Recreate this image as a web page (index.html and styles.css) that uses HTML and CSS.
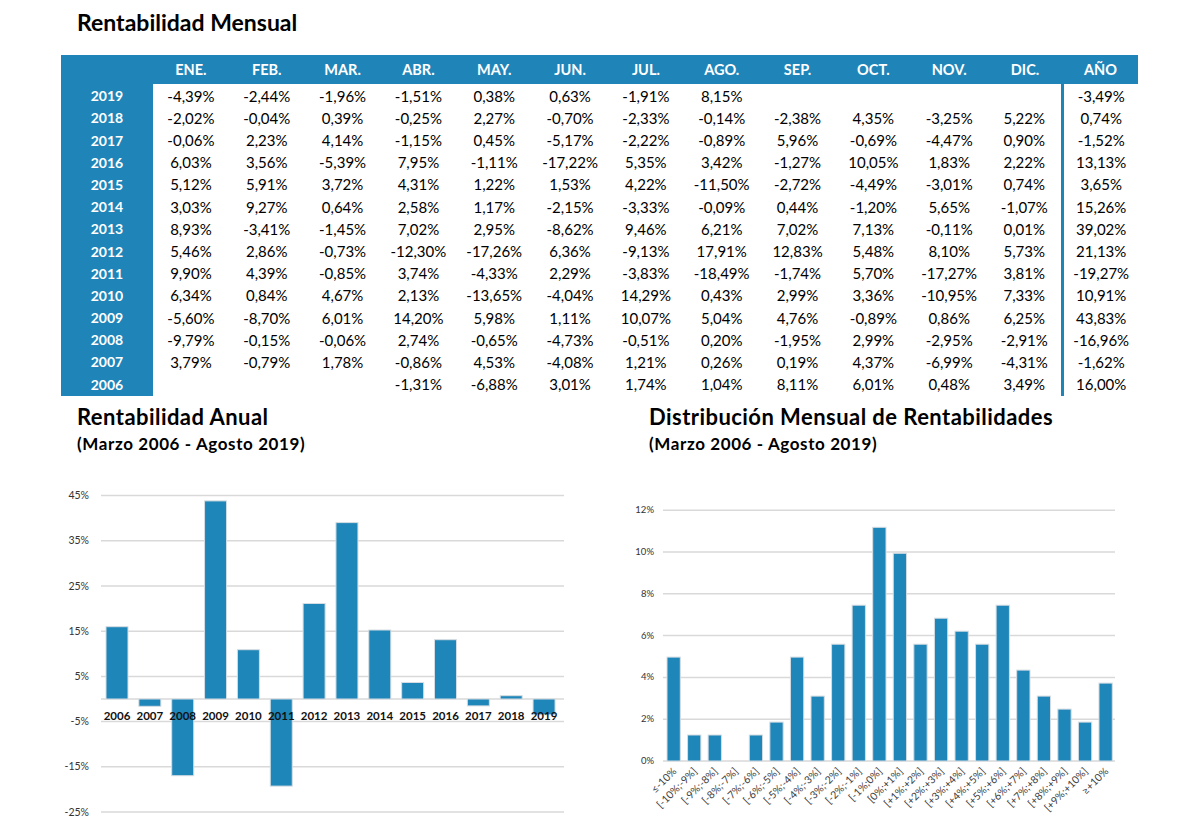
FILE: index.html
```html
<!DOCTYPE html>
<html lang="es">
<head>
<meta charset="utf-8">
<title>Rentabilidad</title>
<link rel="stylesheet" href="styles.css">
</head>
<body>
<div class="page">
  <h1 class="title-main">Rentabilidad Mensual</h1>
  <table class="ret-table">
    <colgroup>
      <col class="c-year">
      <col class="c-m"><col class="c-m"><col class="c-m"><col class="c-m"><col class="c-m"><col class="c-m">
      <col class="c-m"><col class="c-m"><col class="c-m"><col class="c-m"><col class="c-m"><col class="c-m">
      <col class="c-anio">
    </colgroup>
    <thead>
      <tr><th></th><th>ENE.</th><th>FEB.</th><th>MAR.</th><th>ABR.</th><th>MAY.</th><th>JUN.</th><th>JUL.</th><th>AGO.</th><th>SEP.</th><th>OCT.</th><th>NOV.</th><th>DIC.</th><th>AÑO</th></tr>
    </thead>
    <tbody>
      <tr><td class="yr">2019</td><td>-4,39%</td><td>-2,44%</td><td>-1,96%</td><td>-1,51%</td><td>0,38%</td><td>0,63%</td><td>-1,91%</td><td>8,15%</td><td></td><td></td><td></td><td></td><td class="anio">-3,49%</td></tr>
      <tr><td class="yr">2018</td><td>-2,02%</td><td>-0,04%</td><td>0,39%</td><td>-0,25%</td><td>2,27%</td><td>-0,70%</td><td>-2,33%</td><td>-0,14%</td><td>-2,38%</td><td>4,35%</td><td>-3,25%</td><td>5,22%</td><td class="anio">0,74%</td></tr>
      <tr><td class="yr">2017</td><td>-0,06%</td><td>2,23%</td><td>4,14%</td><td>-1,15%</td><td>0,45%</td><td>-5,17%</td><td>-2,22%</td><td>-0,89%</td><td>5,96%</td><td>-0,69%</td><td>-4,47%</td><td>0,90%</td><td class="anio">-1,52%</td></tr>
      <tr><td class="yr">2016</td><td>6,03%</td><td>3,56%</td><td>-5,39%</td><td>7,95%</td><td>-1,11%</td><td>-17,22%</td><td>5,35%</td><td>3,42%</td><td>-1,27%</td><td>10,05%</td><td>1,83%</td><td>2,22%</td><td class="anio">13,13%</td></tr>
      <tr><td class="yr">2015</td><td>5,12%</td><td>5,91%</td><td>3,72%</td><td>4,31%</td><td>1,22%</td><td>1,53%</td><td>4,22%</td><td>-11,50%</td><td>-2,72%</td><td>-4,49%</td><td>-3,01%</td><td>0,74%</td><td class="anio">3,65%</td></tr>
      <tr><td class="yr">2014</td><td>3,03%</td><td>9,27%</td><td>0,64%</td><td>2,58%</td><td>1,17%</td><td>-2,15%</td><td>-3,33%</td><td>-0,09%</td><td>0,44%</td><td>-1,20%</td><td>5,65%</td><td>-1,07%</td><td class="anio">15,26%</td></tr>
      <tr><td class="yr">2013</td><td>8,93%</td><td>-3,41%</td><td>-1,45%</td><td>7,02%</td><td>2,95%</td><td>-8,62%</td><td>9,46%</td><td>6,21%</td><td>7,02%</td><td>7,13%</td><td>-0,11%</td><td>0,01%</td><td class="anio">39,02%</td></tr>
      <tr><td class="yr">2012</td><td>5,46%</td><td>2,86%</td><td>-0,73%</td><td>-12,30%</td><td>-17,26%</td><td>6,36%</td><td>-9,13%</td><td>17,91%</td><td>12,83%</td><td>5,48%</td><td>8,10%</td><td>5,73%</td><td class="anio">21,13%</td></tr>
      <tr><td class="yr">2011</td><td>9,90%</td><td>4,39%</td><td>-0,85%</td><td>3,74%</td><td>-4,33%</td><td>2,29%</td><td>-3,83%</td><td>-18,49%</td><td>-1,74%</td><td>5,70%</td><td>-17,27%</td><td>3,81%</td><td class="anio">-19,27%</td></tr>
      <tr><td class="yr">2010</td><td>6,34%</td><td>0,84%</td><td>4,67%</td><td>2,13%</td><td>-13,65%</td><td>-4,04%</td><td>14,29%</td><td>0,43%</td><td>2,99%</td><td>3,36%</td><td>-10,95%</td><td>7,33%</td><td class="anio">10,91%</td></tr>
      <tr><td class="yr">2009</td><td>-5,60%</td><td>-8,70%</td><td>6,01%</td><td>14,20%</td><td>5,98%</td><td>1,11%</td><td>10,07%</td><td>5,04%</td><td>4,76%</td><td>-0,89%</td><td>0,86%</td><td>6,25%</td><td class="anio">43,83%</td></tr>
      <tr><td class="yr">2008</td><td>-9,79%</td><td>-0,15%</td><td>-0,06%</td><td>2,74%</td><td>-0,65%</td><td>-4,73%</td><td>-0,51%</td><td>0,20%</td><td>-1,95%</td><td>2,99%</td><td>-2,95%</td><td>-2,91%</td><td class="anio">-16,96%</td></tr>
      <tr><td class="yr">2007</td><td>3,79%</td><td>-0,79%</td><td>1,78%</td><td>-0,86%</td><td>4,53%</td><td>-4,08%</td><td>1,21%</td><td>0,26%</td><td>0,19%</td><td>4,37%</td><td>-6,99%</td><td>-4,31%</td><td class="anio">-1,62%</td></tr>
      <tr class="last"><td class="yr">2006</td><td></td><td></td><td></td><td>-1,31%</td><td>-6,88%</td><td>3,01%</td><td>1,74%</td><td>1,04%</td><td>8,11%</td><td>6,01%</td><td>0,48%</td><td>3,49%</td><td class="anio">16,00%</td></tr>
    </tbody>
  </table>

  <div class="charts">
    <section class="chart chart-left">
      <h2 class="chart-title">Rentabilidad Anual</h2>
      <p class="chart-sub">(Marzo 2006 - Agosto 2019)</p>
      <svg class="plot" width="520" height="350" viewBox="0 0 520 350">
        <g class="grid">
          <line x1="41" x2="504" y1="16.6" y2="16.6"/>
          <line x1="41" x2="504" y1="61.8" y2="61.8"/>
          <line x1="41" x2="504" y1="107" y2="107"/>
          <line x1="41" x2="504" y1="152.2" y2="152.2"/>
          <line x1="41" x2="504" y1="197.4" y2="197.4"/>
          <line x1="41" x2="504" y1="242.6" y2="242.6"/>
          <line x1="41" x2="504" y1="287.8" y2="287.8"/>
          <line x1="41" x2="504" y1="333" y2="333"/>
          <line x1="41" x2="504" y1="220" y2="220"/>
        </g>
        <g class="axis-label">
          <text x="29" y="20.1">45%</text>
          <text x="29" y="65.3">35%</text>
          <text x="29" y="110.5">25%</text>
          <text x="29" y="155.7">15%</text>
          <text x="29" y="200.9">5%</text>
          <text x="29" y="246.1">-5%</text>
          <text x="29" y="291.3">-15%</text>
          <text x="29" y="336.5">-25%</text>
        </g>
        <g class="bar">
          <rect x="46.0" y="147.7" width="22" height="72.3"/>
          <rect x="78.85" y="220" width="22" height="7.3"/>
          <rect x="111.7" y="220" width="22" height="76.7"/>
          <rect x="144.55" y="21.9" width="22" height="198.1"/>
          <rect x="177.4" y="170.7" width="22" height="49.3"/>
          <rect x="210.25" y="220" width="22" height="87.1"/>
          <rect x="243.1" y="124.5" width="22" height="95.5"/>
          <rect x="275.95" y="43.6" width="22" height="176.4"/>
          <rect x="308.8" y="151.0" width="22" height="69.0"/>
          <rect x="341.65" y="203.5" width="22" height="16.5"/>
          <rect x="374.5" y="160.7" width="22" height="59.3"/>
          <rect x="407.35" y="220" width="22" height="6.9"/>
          <rect x="440.2" y="216.7" width="22" height="3.3"/>
          <rect x="473.05" y="220" width="22" height="15.8"/>
        </g>
        <g class="year-label">
          <text x="57" y="241">2006</text>
          <text x="89.85" y="241">2007</text>
          <text x="122.7" y="241">2008</text>
          <text x="155.55" y="241">2009</text>
          <text x="188.4" y="241">2010</text>
          <text x="221.25" y="241">2011</text>
          <text x="254.1" y="241">2012</text>
          <text x="286.95" y="241">2013</text>
          <text x="319.8" y="241">2014</text>
          <text x="352.65" y="241">2015</text>
          <text x="385.5" y="241">2016</text>
          <text x="418.35" y="241">2017</text>
          <text x="451.2" y="241">2018</text>
          <text x="484.05" y="241">2019</text>
        </g>
      </svg>
    </section>

    <section class="chart chart-right">
      <h2 class="chart-title">Distribución Mensual de Rentabilidades</h2>
      <p class="chart-sub">(Marzo 2006 - Agosto 2019)</p>
      <svg class="plot" width="560" height="350" viewBox="0 0 560 350">
        <g class="grid">
          <line x1="63" x2="515" y1="31.2" y2="31.2"/>
          <line x1="63" x2="515" y1="73" y2="73"/>
          <line x1="63" x2="515" y1="114.8" y2="114.8"/>
          <line x1="63" x2="515" y1="156.6" y2="156.6"/>
          <line x1="63" x2="515" y1="198.4" y2="198.4"/>
          <line x1="63" x2="515" y1="240.2" y2="240.2"/>
          <line x1="63" x2="515" y1="282" y2="282"/>
        </g>
        <g class="axis-label small">
          <text x="54" y="34.2">12%</text>
          <text x="54" y="76">10%</text>
          <text x="54" y="117.8">8%</text>
          <text x="54" y="159.6">6%</text>
          <text x="54" y="201.4">4%</text>
          <text x="54" y="243.2">2%</text>
          <text x="54" y="285">0%</text>
        </g>
        <g class="bar">
          <rect x="67" y="178.1" width="13.3" height="103.9"/>
          <rect x="87.57" y="256" width="13.3" height="26"/>
          <rect x="108.14" y="256" width="13.3" height="26"/>
          <rect x="149.28" y="256" width="13.3" height="26"/>
          <rect x="169.85" y="243.1" width="13.3" height="38.9"/>
          <rect x="190.42" y="178.1" width="13.3" height="103.9"/>
          <rect x="210.99" y="217.1" width="13.3" height="64.9"/>
          <rect x="231.56" y="165.2" width="13.3" height="116.8"/>
          <rect x="252.13" y="126.2" width="13.3" height="155.8"/>
          <rect x="272.7" y="48.3" width="13.3" height="233.7"/>
          <rect x="293.27" y="74.3" width="13.3" height="207.7"/>
          <rect x="313.84" y="165.2" width="13.3" height="116.8"/>
          <rect x="334.41" y="139.2" width="13.3" height="142.8"/>
          <rect x="354.98" y="152.2" width="13.3" height="129.8"/>
          <rect x="375.55" y="165.2" width="13.3" height="116.8"/>
          <rect x="396.12" y="126.2" width="13.3" height="155.8"/>
          <rect x="416.69" y="191.1" width="13.3" height="90.9"/>
          <rect x="437.26" y="217.1" width="13.3" height="64.9"/>
          <rect x="457.83" y="230.1" width="13.3" height="51.9"/>
          <rect x="478.4" y="243.1" width="13.3" height="38.9"/>
          <rect x="498.97" y="204.1" width="13.3" height="77.9"/>
        </g>
        <g class="bin-label">
          <text x="77.15" y="293" transform="rotate(-45 77.15 293)">≤-10%</text>
          <text x="97.72" y="293" transform="rotate(-45 97.72 293)">[-10%;-9%]</text>
          <text x="118.29" y="293" transform="rotate(-45 118.29 293)">[-9%;-8%]</text>
          <text x="138.86" y="293" transform="rotate(-45 138.86 293)">[-8%;-7%]</text>
          <text x="159.43" y="293" transform="rotate(-45 159.43 293)">[-7%;-6%]</text>
          <text x="180" y="293" transform="rotate(-45 180 293)">[-6%;-5%]</text>
          <text x="200.57" y="293" transform="rotate(-45 200.57 293)">[-5%;-4%]</text>
          <text x="221.14" y="293" transform="rotate(-45 221.14 293)">[-4%;-3%]</text>
          <text x="241.71" y="293" transform="rotate(-45 241.71 293)">[-3%;-2%]</text>
          <text x="262.28" y="293" transform="rotate(-45 262.28 293)">[-2%;-1%]</text>
          <text x="282.85" y="293" transform="rotate(-45 282.85 293)">[-1%;0%]</text>
          <text x="303.42" y="293" transform="rotate(-45 303.42 293)">[0%;+1%]</text>
          <text x="323.99" y="293" transform="rotate(-45 323.99 293)">[+1%;+2%]</text>
          <text x="344.56" y="293" transform="rotate(-45 344.56 293)">[+2%;+3%]</text>
          <text x="365.13" y="293" transform="rotate(-45 365.13 293)">[+3%;+4%]</text>
          <text x="385.7" y="293" transform="rotate(-45 385.7 293)">[+4%;+5%]</text>
          <text x="406.27" y="293" transform="rotate(-45 406.27 293)">[+5%;+6%]</text>
          <text x="426.84" y="293" transform="rotate(-45 426.84 293)">[+6%;+7%]</text>
          <text x="447.41" y="293" transform="rotate(-45 447.41 293)">[+7%;+8%]</text>
          <text x="467.98" y="293" transform="rotate(-45 467.98 293)">[+8%;+9%]</text>
          <text x="488.55" y="293" transform="rotate(-45 488.55 293)">[+9%;+10%]</text>
          <text x="509.12" y="293" transform="rotate(-45 509.12 293)">≥+10%</text>
        </g>
      </svg>
    </section>
  </div>
</div>
</body>
</html>
```
FILE: styles.css
```css
* { box-sizing: border-box; }
html, body { margin: 0; padding: 0; background: #ffffff; }
body { font-family: "Lato", "Liberation Sans", sans-serif; color: #000; }
.page { width: 1200px; height: 839px; overflow: hidden; }

.title-main {
  margin: 0;
  padding: 9px 0 0 77px;
  font-size: 23px;
  font-weight: 700;
  line-height: 1.2;
}

.ret-table {
  margin: 18px 0 0 61px;
  border-collapse: collapse;
  table-layout: fixed;
  width: 1077px;
}
.c-year { width: 92px; }
.c-m { width: 75.83px; }
.c-anio { width: 75px; }

.ret-table th {
  background: #1f85b9;
  color: #fff;
  font-size: 14.5px;
  font-weight: 700;
  height: 29.5px;
  padding: 0;
  text-align: center;
}
.ret-table td {
  height: 22.2px;
  padding: 2px 0 0;
  font-size: 15px;
  text-align: center;
  line-height: 1;
}
.ret-table tr.last td { height: 23.8px; padding-bottom: 1.6px; }
.ret-table td.yr {
  background: #1f85b9;
  color: #fff;
  font-weight: 700;
  font-size: 14px;
}
.ret-table td.anio { border-left: 3px solid #1f85b9; }

.charts { display: flex; margin-top: 7.5px; }
.chart { display: flex; flex-direction: column; }
.chart-left { width: 540px; margin-left: 60px; }
.chart-right { width: 560px; }
.chart-left .chart-title, .chart-left .chart-sub { padding-left: 17px; }
.chart-right .chart-title, .chart-right .chart-sub { padding-left: 49px; }

.chart-title {
  margin: 0;
  font-size: 22px;
  font-weight: 700;
  letter-spacing: 0.45px;
  line-height: 26px;
}
.chart-sub {
  margin: 4.6px 0 0;
  font-size: 17px;
  font-weight: 700;
  letter-spacing: 0.6px;
  line-height: 20px;
}
.plot { display: block; margin-top: 24.9px; }

.grid line { stroke: #d9d9d9; stroke-width: 1.5; }
.axis-label text { font-family: "Lato", "Liberation Sans", sans-serif; font-size: 10.5px; fill: #333333; text-anchor: end; }
.axis-label.small text { font-size: 9.5px; }
.bar rect { fill: #1f86ba; stroke: #d6dde2; stroke-width: 1; }
.year-label text { font-family: "Lato", "Liberation Sans", sans-serif; font-size: 11.5px; font-weight: 700; fill: #111111; text-anchor: middle; }
.bin-label text { font-family: "Lato", "Liberation Sans", sans-serif; font-size: 10.5px; fill: #404040; text-anchor: end; }
```
